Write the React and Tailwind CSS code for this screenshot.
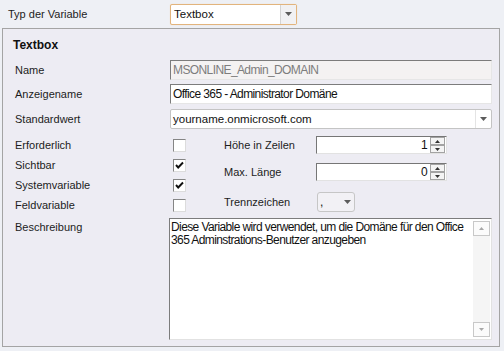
import React from 'react';

const NARROW = "font-['Liberation_Sans',Arial,sans-serif] text-[12px] tracking-[-0.6px]";

function Triangle({ up, color = '#5c5c5c', w = 7, h = 4 }) {
  return (
    <svg width={w} height={h} viewBox={`0 0 ${w} ${h}`}>
      <path d={up ? `M0 ${h}H${w}L${w / 2} 0z` : `M0 0H${w}L${w / 2} ${h}z`} fill={color} />
    </svg>
  );
}

function Checkbox({ checked }) {
  return (
    <div className="w-[13px] h-[13px] bg-white border border-t-[#858585] border-l-[#858585] border-b-[#dcdcdc] border-r-[#dcdcdc] flex items-center justify-center">
      {checked && (
        <svg width="11" height="11" viewBox="0 0 11 11">
          <polyline points="2,5 4.2,7.5 9,2.5" fill="none" stroke="#111" strokeWidth="1.9" />
        </svg>
      )}
    </div>
  );
}

function Spinner({ value }) {
  return (
    <div className="flex h-[18px] w-[131px] bg-white border border-t-[#767676] border-l-[#767676] border-b-[#e2e2e2] border-r-[#e2e2e2]">
      <div className={`flex-1 text-right pr-[3px] leading-[16px] text-[#111] ${NARROW}`}>{value}</div>
      <div className="flex flex-col w-[15px] mr-[1px]">
        <div className="h-[8px] border border-[#a3a3a3] bg-[#f4f4f4] flex items-center justify-center">
          <Triangle up w={5} h={3} color="#333" />
        </div>
        <div className="h-[8px] border border-[#a3a3a3] bg-[#f4f4f4] flex items-center justify-center">
          <Triangle w={5} h={3} color="#333" />
        </div>
      </div>
    </div>
  );
}

function TextInput({ value, disabled }) {
  return (
    <div
      className={`flex-1 h-[20px] border border-t-[#7c7c7c] border-l-[#7c7c7c] border-b-[#e6e6e6] border-r-[#e6e6e6] pl-[2px] leading-[18px] ${NARROW} ${
        disabled ? 'bg-[#f4f2f2] text-[#7d7d7d]' : 'bg-white text-[#111]'
      }`}
    >
      {value}
    </div>
  );
}

export default function App() {
  return (
    <div className="w-[504px] h-[351px] overflow-hidden bg-[#eef0f5] text-[11px] text-[#1c1c1c] font-['Liberation_Sans',Arial,sans-serif]">
      {/* Typ der Variable */}
      <div className="flex items-center h-[28px] pl-[8px]">
        <span className="w-[162px]">Typ der Variable</span>
        <div className="flex h-[21px] w-[127px] bg-white border border-[#e2b47d] rounded-[2px] shadow-[0_0_1px_#f3d3ab]">
          <div className="flex-1 pl-[3px] leading-[19px] text-[11.5px] text-[#111]">Textbox</div>
          <div className="w-[16px] border-l border-[#d4d4d4] bg-[#f1f1f3] flex items-center justify-center">
            <Triangle />
          </div>
        </div>
      </div>

      {/* Textbox panel */}
      <div className="ml-[2px] w-[498px] h-[319px] border border-[#a4a4a4] bg-[#edecf3]">
        <div className="pl-[10px] mt-[9px] h-[15px] leading-[15px] text-[12px] font-bold text-[#111]">Textbox</div>

        <div className="pl-[12px] pr-[7px] mt-[7px]">
          <div className="flex items-center h-[20px]">
            <span className="w-[155px]">Name</span>
            <TextInput value="MSONLINE_Admin_DOMAIN" disabled />
          </div>
          <div className="flex items-center h-[20px] mt-[4px]">
            <span className="w-[155px]">Anzeigename</span>
            <TextInput value="Office 365 - Administrator Domäne" />
          </div>
          <div className="flex items-center h-[20px] mt-[5px]">
            <span className="w-[155px]">Standardwert</span>
            <div className="flex-1 flex h-[20px] bg-white border border-[#c4c4c4] rounded-[2px]">
              <div className="flex-1 pl-[2px] leading-[18px] text-[11.5px] text-[#111]">yourname.onmicrosoft.com</div>
              <div className="w-[16px] border-l border-[#e4e4e4] flex items-center justify-center">
                <Triangle />
              </div>
            </div>
          </div>

          {/* flags and sizes */}
          <div className="flex mt-[6px]">
            <div className="flex flex-col w-[171px]">
              {[
                ['Erforderlich', false],
                ['Sichtbar', true],
                ['Systemvariable', true],
                ['Feldvariable', false],
              ].map(([label, checked]) => (
                <div key={label} className="flex items-center h-[20px]">
                  <span className="w-[158px]">{label}</span>
                  <Checkbox checked={checked} />
                </div>
              ))}
            </div>
            <div className="flex flex-col ml-[38px]">
              <div className="flex items-center h-[20px]">
                <span className="w-[92px]">Höhe in Zeilen</span>
                <Spinner value="1" />
              </div>
              <div className="flex items-center h-[20px] mt-[7px]">
                <span className="w-[92px]">Max. Länge</span>
                <Spinner value="0" />
              </div>
              <div className="flex items-center h-[20px] mt-[10px]">
                <span className="w-[93px]">Trennzeichen</span>
                <div className="flex h-[20px] w-[38px] bg-[#f2f1f5] border border-[#c6c6c6] rounded-[3px]">
                  <div className={`flex-1 pl-[2px] leading-[18px] ${NARROW}`}>,</div>
                  <div className="w-[14px] flex items-center justify-center">
                    <Triangle />
                  </div>
                </div>
              </div>
            </div>
          </div>

          {/* Beschreibung */}
          <div className="flex items-start mt-[3px]">
            <span className="w-[155px] pt-[2px] leading-[14px]">Beschreibung</span>
            <div className="flex w-[323px] h-[122px] shrink-0 bg-white border border-t-[#7c7c7c] border-l-[#7c7c7c] border-b-[#e2e2e2] border-r-[#e2e2e2]">
              <div className={`flex-1 pl-[1px] pt-[2px] leading-[13px] text-[#111] ${NARROW}`}>
                Diese Variable wird verwendet, um die Domäne für den Office 365 Adminstrations-Benutzer anzugeben
              </div>
              <div className="w-[17px] my-[2px] mr-[1px] flex flex-col justify-between bg-[#f5f5f5]">
                <div className="h-[15px] border border-[#c8c8c8] bg-[#fbfbfb] flex items-center justify-center">
                  <Triangle up w={5} h={3} color="#a8a8a8" />
                </div>
                <div className="h-[15px] border border-[#c8c8c8] bg-[#fbfbfb] flex items-center justify-center">
                  <Triangle w={5} h={3} color="#a8a8a8" />
                </div>
              </div>
            </div>
          </div>
        </div>
      </div>
    </div>
  );
}
